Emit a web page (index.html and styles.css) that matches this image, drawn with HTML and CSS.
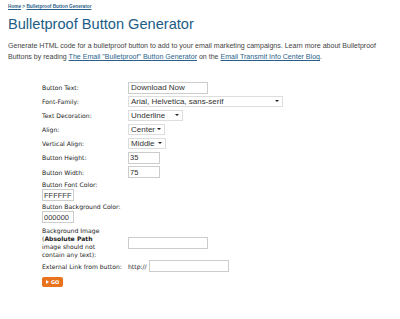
FILE: index.html
```html
<!DOCTYPE html>
<html lang="en">
<head>
    <meta charset="UTF-8">
    <title>Bulletproof Button Generator</title>
    <link rel="stylesheet" href="styles.css">
</head>
<body>
    <div class="page">
        <!-- Breadcrumb -->
        <div class="crumbs">
            <a href="#">Home</a> &gt; <a href="#">Bulletproof Button Generator</a>
        </div>

        <h1>Bulletproof Button Generator</h1>

        <p class="intro">
            Generate HTML code for a bulletproof button to add to your email marketing campaigns. Learn more about Bulletproof
            Buttons by reading <a href="#">The Email "Bulletproof" Button Generator</a> on the <a href="#">Email Transmit Info Center Blog</a>.
        </p>

        <!-- Generator form -->
        <form class="gen-form">
            <div class="row first">
                <label>Button Text:</label>
                <input type="text" class="field wide" value="Download Now">
            </div>
            <div class="row">
                <label>Font-Family:</label>
                <div class="select w-font"><span>Arial, Helvetica, sans-serif</span><i></i></div>
            </div>
            <div class="row">
                <label>Text Decoration:</label>
                <div class="select w-deco"><span>Underline</span><i></i></div>
            </div>
            <div class="row">
                <label>Align:</label>
                <div class="select w-align"><span>Center</span><i></i></div>
            </div>
            <div class="row">
                <label>Vertical Align:</label>
                <div class="select w-valign"><span>Middle</span><i></i></div>
            </div>
            <div class="row tall">
                <label>Button Height:</label>
                <input type="text" class="field short" value="35">
            </div>
            <div class="row">
                <label>Button Width:</label>
                <input type="text" class="field short" value="75">
            </div>
            <div class="stack">
                <label>Button Font Color:</label>
                <input type="text" class="field short" value="FFFFFF">
            </div>
            <div class="stack">
                <label>Button Background Color:</label>
                <input type="text" class="field short" value="000000">
            </div>
            <div class="row image-row">
                <label>Background Image<br>(<b>Absolute Path</b><br>image should not<br>contain any text):</label>
                <input type="text" class="field wide">
            </div>
            <div class="row link-row">
                <label class="auto">External Link from button:</label>
                <span class="prefix">http://</span>
                <input type="text" class="field wide">
            </div>
            <button type="button" class="go-btn"><span class="tri"></span>GO</button>
        </form>
    </div>
</body>
</html>
```

FILE: styles.css
```css
body {
    margin: 0;
    background: #fff;
    font-family: "Liberation Sans", Arial, sans-serif;
    color: #333;
}

.page {
    padding: 4px 8px;
}

a {
    color: #2b5f8a;
}

.crumbs {
    font-size: 4.7px;
    font-weight: bold;
    color: #2b5f8a;
    height: 9px;
}

h1 {
    margin: 1px 0 6px;
    font-size: 14.6px;
    font-weight: normal;
    color: #215c86;
    line-height: 20px;
}

.intro {
    margin: 0 0 19px;
    font-size: 7.05px;
    line-height: 11px;
    color: #444;
}

/* Form */
.gen-form {
    padding-left: 34px;
    font-family: "DejaVu Sans", Verdana, sans-serif;
}

.row {
    display: flex;
    align-items: center;
    height: 14px;
}

.row.first {
    height: 13px;
}

.row.tall {
    height: 15px;
}

.row label {
    width: 86px;
    flex-shrink: 0;
    font-size: 6.1px;
    color: #222;
}

.stack {
    display: flex;
    flex-direction: column;
    align-items: flex-start;
    margin-top: 2px;
}

.stack label {
    font-size: 6.1px;
    color: #222;
    line-height: 8px;
}

.field {
    box-sizing: border-box;
    height: 12px;
    padding: 0 2px;
    border: 1px solid #ccc;
    font-family: "Liberation Sans", Arial, sans-serif;
    font-size: 8px;
    color: #333;
    outline: none;
}

.field.wide {
    width: 80px;
}

.field.short {
    width: 32px;
    padding: 0 1px;
    font-size: 7.5px;
}

.select {
    box-sizing: border-box;
    display: flex;
    align-items: center;
    justify-content: space-between;
    height: 11px;
    padding: 0 3px 0 2px;
    border: 1px solid #ddd;
    font-family: "Liberation Sans", Arial, sans-serif;
    font-size: 8px;
    color: #333;
}

.select i {
    width: 0;
    height: 0;
    border-left: 2px solid transparent;
    border-right: 2px solid transparent;
    border-top: 2px solid #222;
}

.w-font { width: 155px; }
.w-deco { width: 55px; }
.w-align { width: 37px; }
.w-valign { width: 38px; }

.image-row {
    height: auto;
    margin-top: 4px;
}

.image-row label {
    line-height: 8px;
}

.prefix {
    font-size: 6.1px;
    color: #222;
    width: 21px;
}

.go-btn {
    display: flex;
    align-items: center;
    gap: 2px;
    margin-top: 4px;
    height: 10px;
    padding: 0 4px;
    border: none;
    border-radius: 2px;
    background: #e8731c;
    color: #fff;
    font-family: "DejaVu Sans", Verdana, sans-serif;
    font-size: 5px;
    font-weight: bold;
}

.tri {
    width: 0;
    height: 0;
    border-top: 2px solid transparent;
    border-bottom: 2px solid transparent;
    border-left: 3px solid #fff;
}
```
